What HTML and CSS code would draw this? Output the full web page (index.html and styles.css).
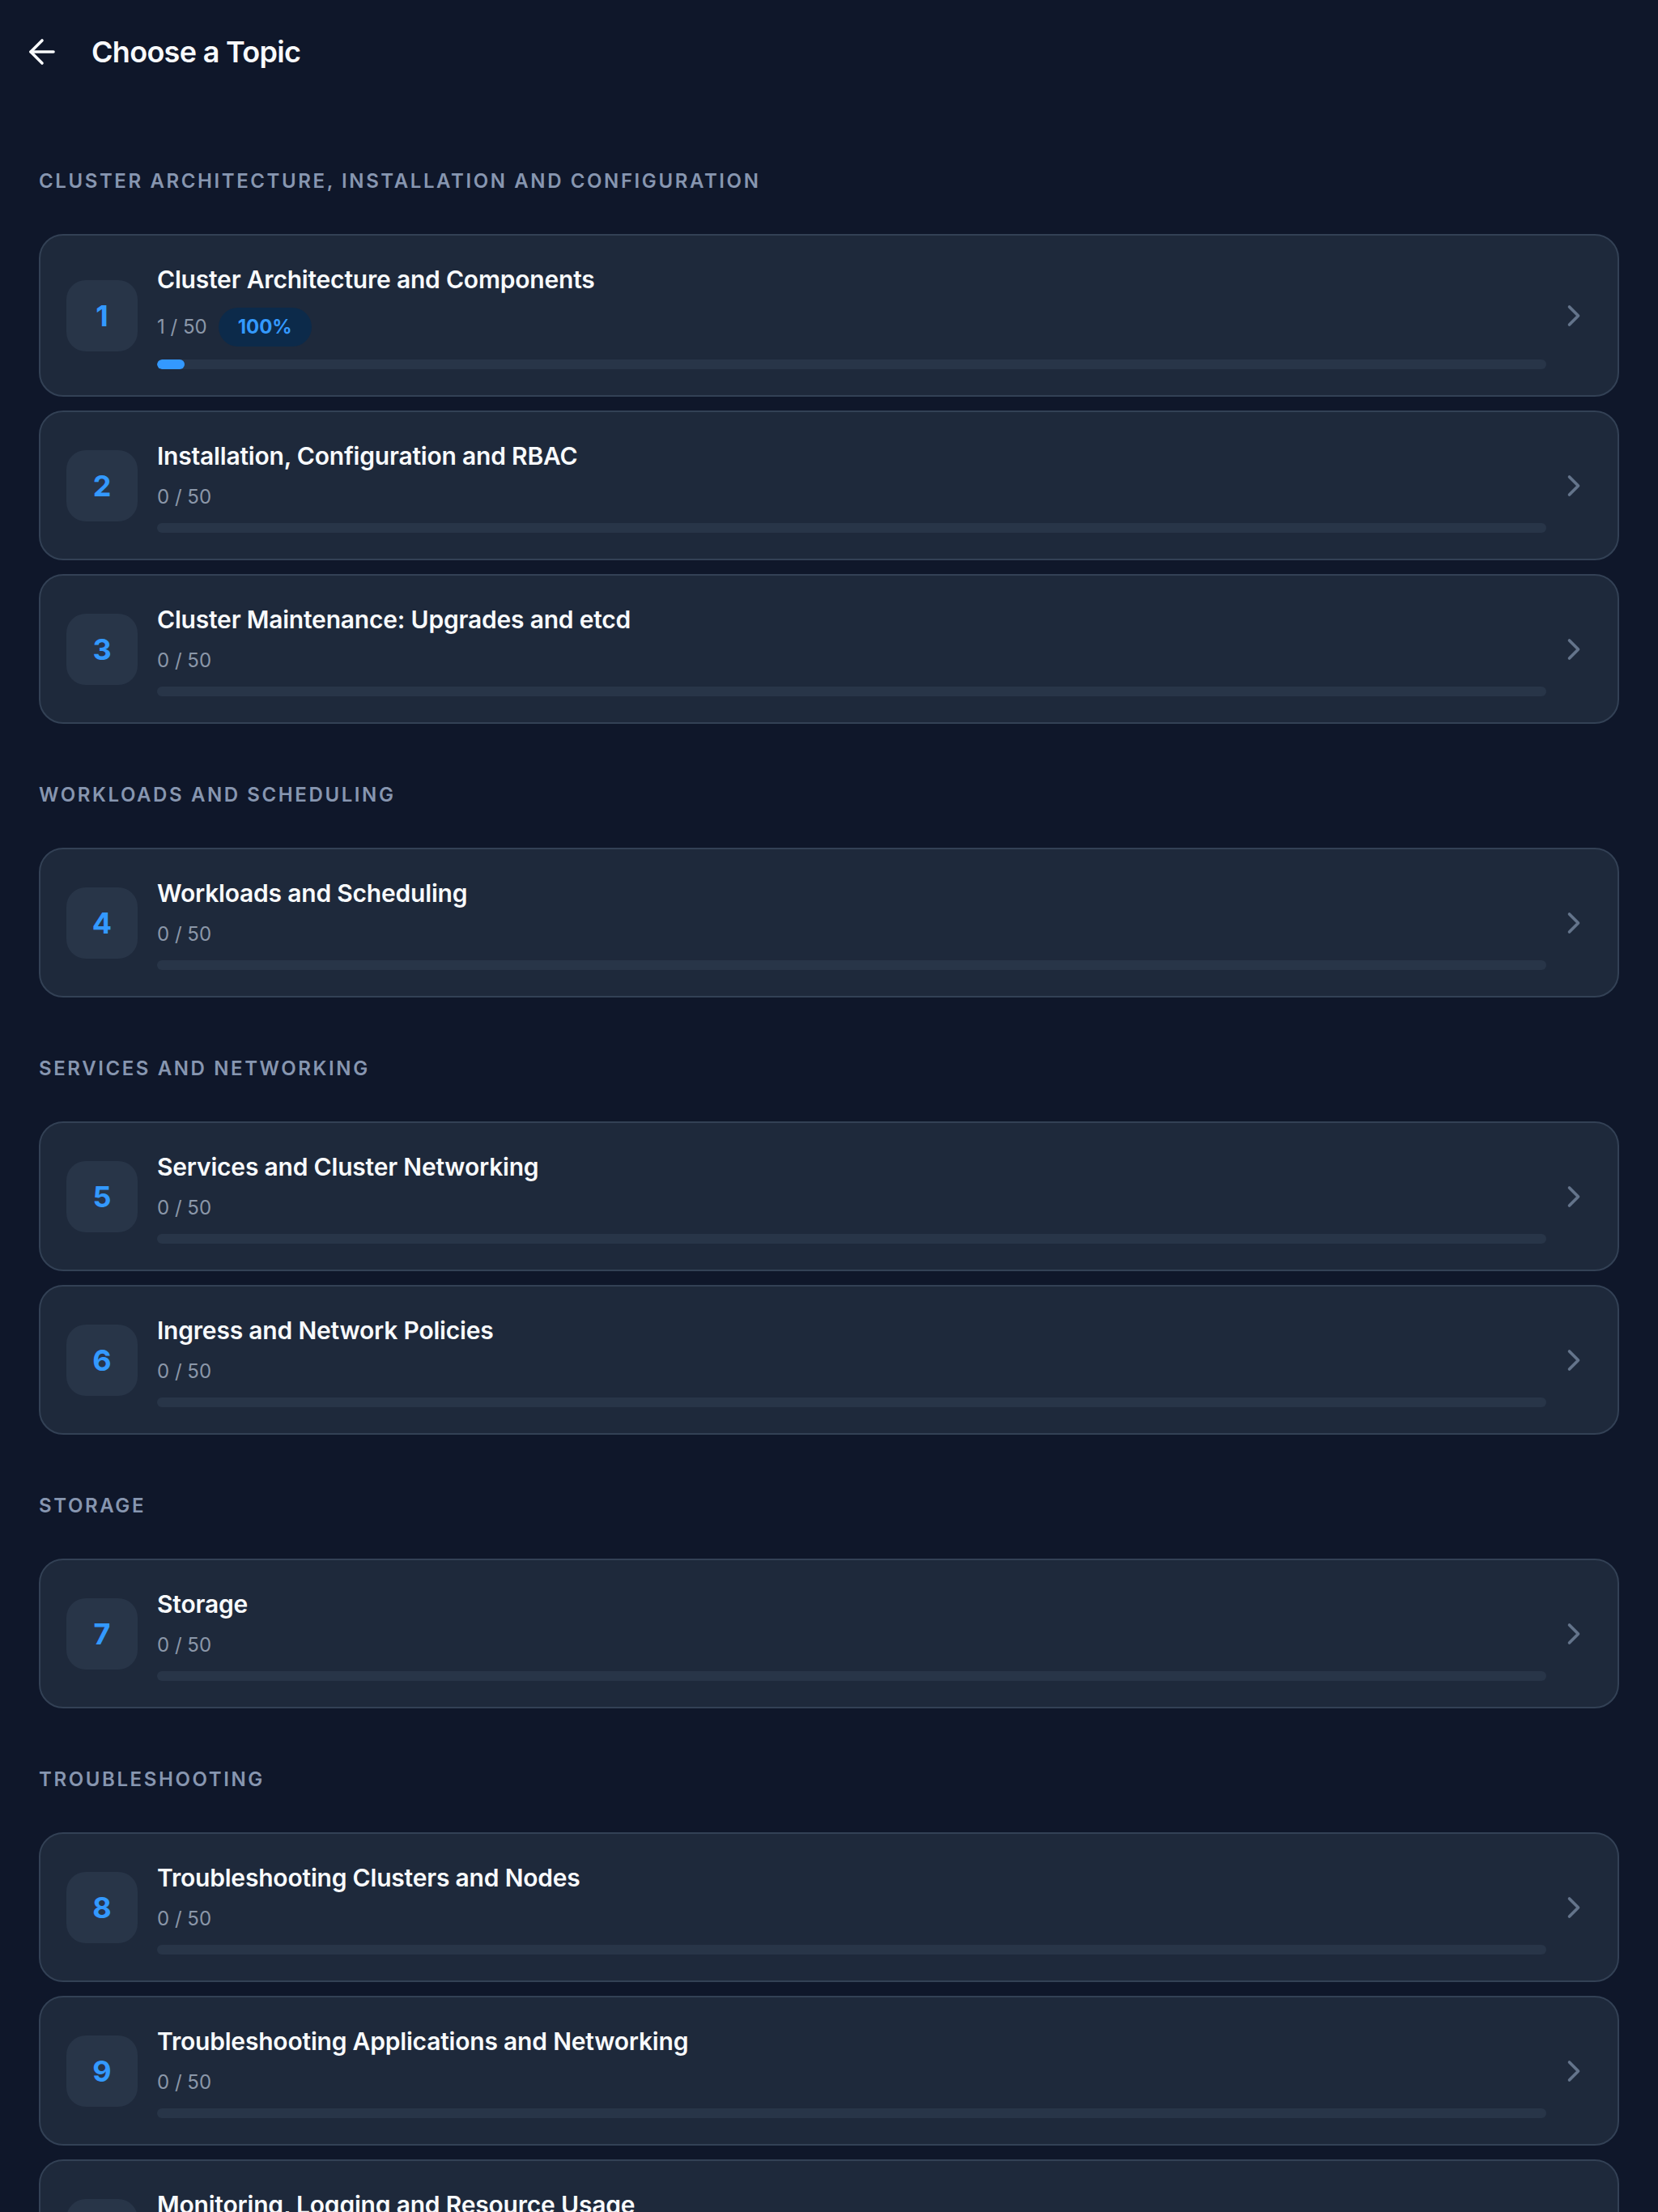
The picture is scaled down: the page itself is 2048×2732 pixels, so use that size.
FILE: index.html
```html
<!DOCTYPE html>
<html lang="en">
<head>
<meta charset="utf-8">
<title>Choose a Topic</title>
<link rel="stylesheet" href="styles.css">
</head>
<body>
<header class="topbar">
  <button class="back" aria-label="Back">
    <svg viewBox="0 0 24 24" fill="none" stroke="currentColor" stroke-width="1.8" stroke-linecap="round" stroke-linejoin="round"><path d="M19 12H5"/><path d="m12 19-7-7 7-7"/></svg>
  </button>
  <h1 class="page-title">Choose a Topic</h1>
</header>
<main class="content">
  <section class="group">
    <h2 class="group-label">Cluster Architecture, Installation and Configuration</h2>
    <div class="cards">
      <a class="card" href="#">
        <span class="num">1</span>
        <div class="body">
          <div class="title">Cluster Architecture and Components</div>
          <div class="meta"><span>1 / 50</span><span class="badge">100%</span></div>
          <div class="bar"><div class="fill" style="width:2%"></div></div>
        </div>
        <svg class="chev" viewBox="0 0 24 24" fill="none" stroke="currentColor" stroke-width="2" stroke-linecap="round" stroke-linejoin="round"><path d="m9 18 6-6-6-6"/></svg>
      </a>
      <a class="card" href="#">
        <span class="num">2</span>
        <div class="body">
          <div class="title">Installation, Configuration and RBAC</div>
          <div class="meta"><span>0 / 50</span></div>
          <div class="bar"></div>
        </div>
        <svg class="chev" viewBox="0 0 24 24" fill="none" stroke="currentColor" stroke-width="2" stroke-linecap="round" stroke-linejoin="round"><path d="m9 18 6-6-6-6"/></svg>
      </a>
      <a class="card" href="#">
        <span class="num">3</span>
        <div class="body">
          <div class="title">Cluster Maintenance: Upgrades and etcd</div>
          <div class="meta"><span>0 / 50</span></div>
          <div class="bar"></div>
        </div>
        <svg class="chev" viewBox="0 0 24 24" fill="none" stroke="currentColor" stroke-width="2" stroke-linecap="round" stroke-linejoin="round"><path d="m9 18 6-6-6-6"/></svg>
      </a>
    </div>
  </section>
  <section class="group">
    <h2 class="group-label">Workloads and Scheduling</h2>
    <div class="cards">
      <a class="card" href="#">
        <span class="num">4</span>
        <div class="body">
          <div class="title">Workloads and Scheduling</div>
          <div class="meta"><span>0 / 50</span></div>
          <div class="bar"></div>
        </div>
        <svg class="chev" viewBox="0 0 24 24" fill="none" stroke="currentColor" stroke-width="2" stroke-linecap="round" stroke-linejoin="round"><path d="m9 18 6-6-6-6"/></svg>
      </a>
    </div>
  </section>
  <section class="group">
    <h2 class="group-label">Services and Networking</h2>
    <div class="cards">
      <a class="card" href="#">
        <span class="num">5</span>
        <div class="body">
          <div class="title">Services and Cluster Networking</div>
          <div class="meta"><span>0 / 50</span></div>
          <div class="bar"></div>
        </div>
        <svg class="chev" viewBox="0 0 24 24" fill="none" stroke="currentColor" stroke-width="2" stroke-linecap="round" stroke-linejoin="round"><path d="m9 18 6-6-6-6"/></svg>
      </a>
      <a class="card" href="#">
        <span class="num">6</span>
        <div class="body">
          <div class="title">Ingress and Network Policies</div>
          <div class="meta"><span>0 / 50</span></div>
          <div class="bar"></div>
        </div>
        <svg class="chev" viewBox="0 0 24 24" fill="none" stroke="currentColor" stroke-width="2" stroke-linecap="round" stroke-linejoin="round"><path d="m9 18 6-6-6-6"/></svg>
      </a>
    </div>
  </section>
  <section class="group">
    <h2 class="group-label">Storage</h2>
    <div class="cards">
      <a class="card" href="#">
        <span class="num">7</span>
        <div class="body">
          <div class="title">Storage</div>
          <div class="meta"><span>0 / 50</span></div>
          <div class="bar"></div>
        </div>
        <svg class="chev" viewBox="0 0 24 24" fill="none" stroke="currentColor" stroke-width="2" stroke-linecap="round" stroke-linejoin="round"><path d="m9 18 6-6-6-6"/></svg>
      </a>
    </div>
  </section>
  <section class="group">
    <h2 class="group-label">Troubleshooting</h2>
    <div class="cards">
      <a class="card" href="#">
        <span class="num">8</span>
        <div class="body">
          <div class="title">Troubleshooting Clusters and Nodes</div>
          <div class="meta"><span>0 / 50</span></div>
          <div class="bar"></div>
        </div>
        <svg class="chev" viewBox="0 0 24 24" fill="none" stroke="currentColor" stroke-width="2" stroke-linecap="round" stroke-linejoin="round"><path d="m9 18 6-6-6-6"/></svg>
      </a>
      <a class="card" href="#">
        <span class="num">9</span>
        <div class="body">
          <div class="title">Troubleshooting Applications and Networking</div>
          <div class="meta"><span>0 / 50</span></div>
          <div class="bar"></div>
        </div>
        <svg class="chev" viewBox="0 0 24 24" fill="none" stroke="currentColor" stroke-width="2" stroke-linecap="round" stroke-linejoin="round"><path d="m9 18 6-6-6-6"/></svg>
      </a>
      <a class="card" href="#">
        <span class="num">10</span>
        <div class="body">
          <div class="title">Monitoring, Logging and Resource Usage</div>
          <div class="meta"><span>0 / 50</span></div>
          <div class="bar"></div>
        </div>
        <svg class="chev" viewBox="0 0 24 24" fill="none" stroke="currentColor" stroke-width="2" stroke-linecap="round" stroke-linejoin="round"><path d="m9 18 6-6-6-6"/></svg>
      </a>
    </div>
  </section>
</main>
</body>
</html>
```
FILE: styles.css
```css
* { box-sizing: border-box; }

body {
  margin: 0;
  background: #0f172a;
  color: #f8fafc;
  font-family: Inter, "Noto Sans", sans-serif;
}

.topbar {
  height: 128px;
  display: flex;
  align-items: center;
  padding-left: 28px;
}

.back {
  width: 48px;
  height: 48px;
  padding: 0;
  border: 0;
  background: none;
  color: #f8fafc;
  display: flex;
}

.back svg { width: 48px; height: 48px; }

.page-title {
  margin: 0 0 0 37px;
  font-size: 36px;
  font-weight: 600;
  letter-spacing: -0.7px;
}

.content {
  padding: 80px 48px 48px;
}

.group + .group { margin-top: 72px; }

.group-label {
  margin: 0 0 49px;
  font-size: 24px;
  line-height: 32px;
  font-weight: 600;
  letter-spacing: 2.6px;
  text-transform: uppercase;
  color: #8796b0;
}

.cards {
  display: flex;
  flex-direction: column;
  gap: 17px;
}

.card {
  display: flex;
  align-items: center;
  gap: 12px;
  padding: 32px;
  border: 2px solid #334155;
  border-radius: 30px;
  background: #1e293b;
  color: inherit;
  text-decoration: none;
}

.num {
  flex: none;
  width: 88px;
  height: 88px;
  margin-right: 12px;
  border-radius: 24px;
  background: #283548;
  color: #3399ff;
  font-size: 36px;
  font-weight: 700;
  display: flex;
  align-items: center;
  justify-content: center;
}

.body { flex: 1; min-width: 0; }

.title {
  font-size: 30px;
  line-height: 45px;
  font-weight: 600;
  letter-spacing: -0.2px;
  color: #f8fafc;
}

.meta {
  display: flex;
  align-items: center;
  gap: 14px;
  margin-top: 12px;
  font-size: 24px;
  line-height: 32px;
  color: #8b97a9;
}

.badge {
  padding: 8px 24px;
  border-radius: 999px;
  background: #0c2a4a;
  color: #3399ff;
  font-weight: 700;
}

.bar {
  height: 12px;
  margin-top: 16px;
  border-radius: 6px;
  background: #283548;
  overflow: hidden;
}

.fill {
  height: 100%;
  border-radius: 6px;
  background: #3399ff;
}

.chev {
  flex: none;
  width: 44px;
  height: 44px;
  color: #64748b;
}
```
